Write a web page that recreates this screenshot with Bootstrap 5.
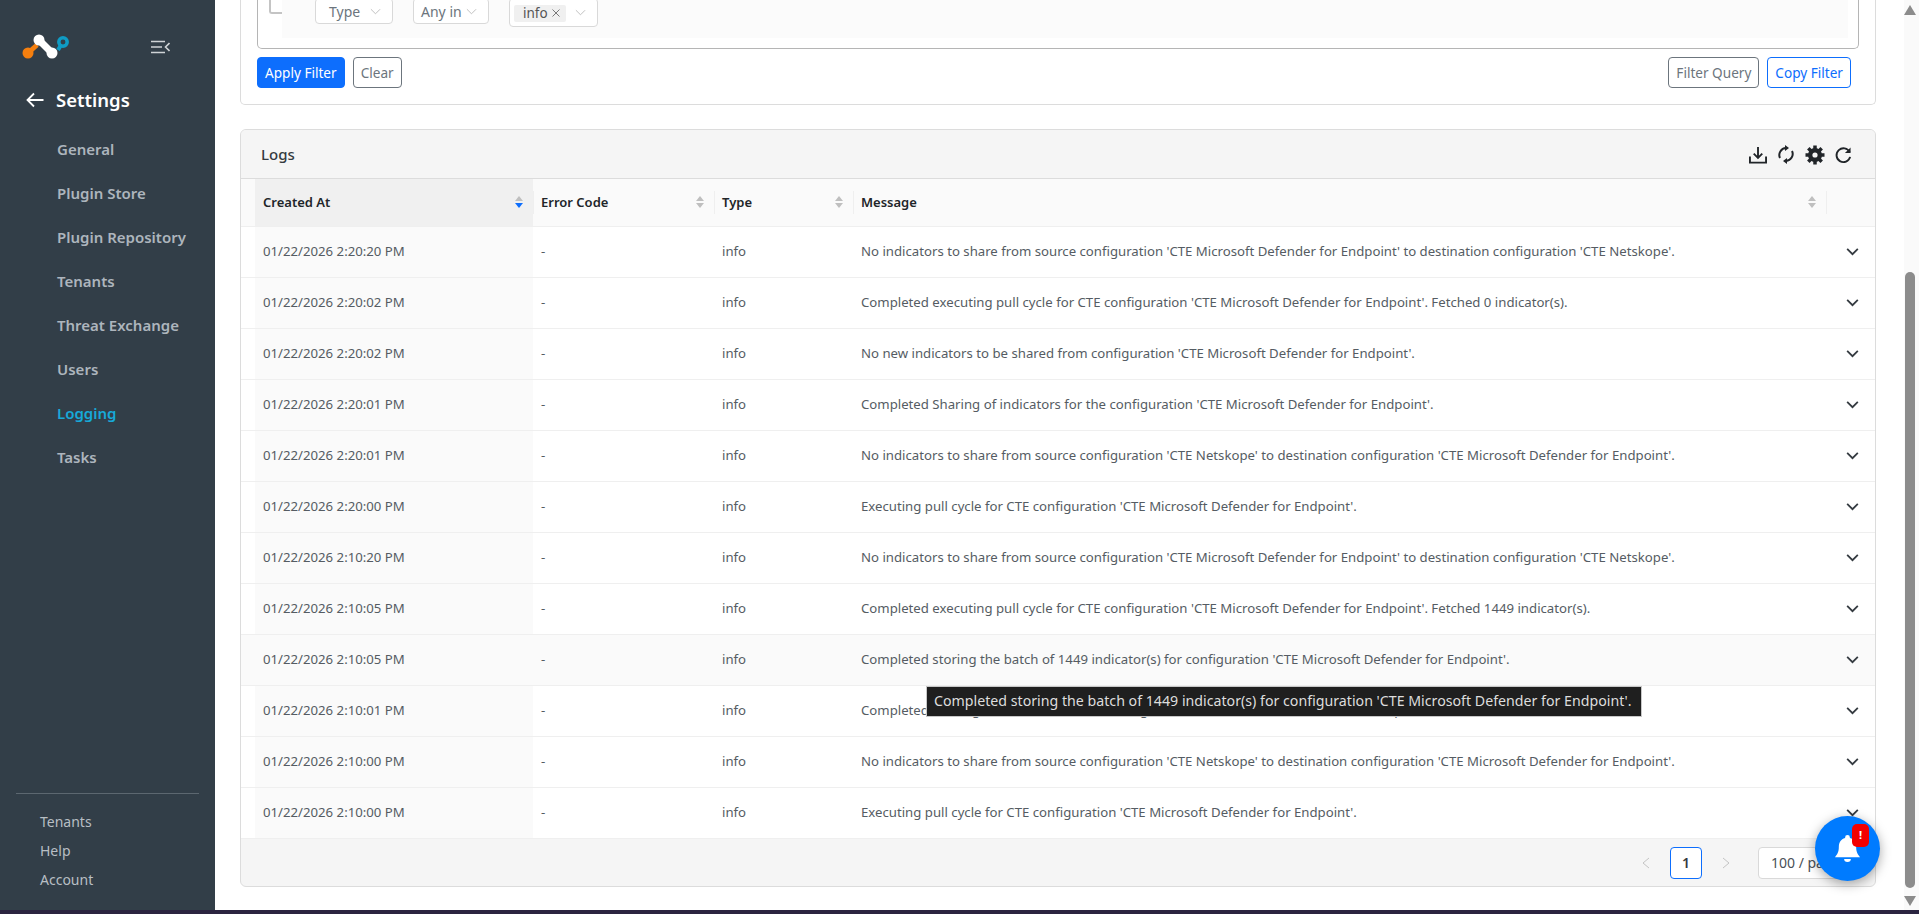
<!DOCTYPE html>
<html lang="en">
<head>
    <meta charset="UTF-8">
    <title>Logging</title>
    <link href="https://cdn.jsdelivr.net/npm/bootstrap@5.3.3/dist/css/bootstrap.min.css" rel="stylesheet">
    <style>
        html, body { height: 100%; overflow: hidden; }
        body { font-family: "Noto Sans", "Open Sans", sans-serif; font-size: 13.2px; color: #495057; background: #2b2440; }
        .shell { height: 910px; background: #fff; }
        .side-bar { width: 215px; background: #323e48; flex: none; height: 910px; }
        .logo-row { height: 58px; margin-top: 18px; padding-left: 22px; padding-right: 45px; }
        .settings-head { color: #fff; font-size: 18.5px; font-weight: 600; padding-left: 26px; gap: 12px; height: 34px; margin-top: 7px; }
        .side-nav { margin-top: 10px; }
        .side-link { display: block; height: 44px; line-height: 44px; padding-left: 57px; color: #adb5bd; font-weight: 600; font-size: 15px; text-decoration: none; }
        .side-link.on { color: #17a9d8; }
        .side-foot { border-top: 1px solid #5c6770; margin: 0 16px; padding: 13px 0 16px 24px; }
        .side-foot a { display: block; height: 29px; line-height: 29px; color: #b8bec4; text-decoration: none; font-size: 14px; }
        .main-pane { flex: 1 1 auto; position: relative; padding: 0 43px 0 25px; overflow: hidden; }
        .scroll-strip { width: 15px; background: #fafafa; position: absolute; right: 0; top: 0; bottom: 0; }
        .scroll-thumb { position: absolute; left: 1px; right: 4px; top: 272px; height: 616px; background: #8c8c8c; border-radius: 5px; }
        .arrow-up, .arrow-down { position: absolute; left: 0; width: 0; height: 0; border-left: 6.5px solid transparent; border-right: 6.5px solid transparent; }
        .arrow-up { top: 5px; border-bottom: 10px solid #8c8c8c; }
        .arrow-down { bottom: 4px; border-top: 10px solid #8c8c8c; }
        .filter-box { height: 105px; border: 1px solid #dcdcdc; border-top: 0; border-radius: 0 0 5px 5px; padding: 0 16px; }
        .rule-box { height: 49px; border: 1px solid #b5b5b5; border-top: 0; border-radius: 0 0 5px 5px; padding-left: 24px; padding-right: 10px; }
        .rule-inner { background: #fbfbfb; height: 38px; padding-left: 33px; gap: 20px; position: relative; }
        .rule-tick { position: absolute; left: -13px; top: -4px; width: 13px; height: 18px; border: 2px solid #c4c4c4; border-top: 0; border-right: 0; border-radius: 0 0 0 3px; }
        .pick { height: 26px; margin-top: -2px; border: 1px solid #d9d9d9; border-radius: 4px; background: #fff; padding-right: 11px; justify-content: space-between; font-size: 14px; color: #6c757d; }
        .pick-type { width: 78px; padding-left: 13px; }
        .pick-op { width: 76px; padding-left: 7px; }
        .pick-val { width: 89px; height: 29px; padding-left: 4px; }
        .pick-tag { background: #f0f0f0; border-radius: 2px; padding: 0 6px 0 9px; color: #555; font-size: 13.5px; width: 52px; height: 17px; line-height: 17px; margin-top: 1px; }
        .btn-row { margin-top: 8px; padding-right: 8px; }
        .flt-btn { height: 31px; padding: 1px 7px 0; font-size: 13.6px; border-radius: 4px; line-height: 1; }
        .log-card { margin-top: 24px; border: 1px solid #dcdcdc; border-radius: 6px; height: 758px; overflow: hidden; background: #f5f5f5; }
        .log-title { height: 49px; padding: 1px 23px 0 20px; background: #f5f5f5; border-bottom: 1px solid #dcdcdc; color: #343a40; font-size: 15px; font-weight: 500; }
        .title-tools { gap: 10px; }
        .log-grid { width: 100%; table-layout: fixed; margin: 0; background: #fff; }
        .log-grid th { height: 47px; background: #fafafa; color: #212529; font-weight: 600; font-size: 13px; padding: 0 8px; border-bottom: 1px solid #efefef; position: relative; vertical-align: middle; }
        .log-grid td { height: 51px; padding: 0 8px; color: #555c63; font-size: 13.2px; border-bottom: 1px solid #efefef; vertical-align: middle; white-space: nowrap; overflow: hidden; }
        .log-grid th.sorted { background: #f0f0f0; }
        .log-grid td.sorted { background: #fafafa; }
        .log-grid tr.hovered td { background: #fafafa; }
        .log-grid .col-gap { width: 14px; padding: 0; background: #fff; }
        .log-grid th.col-gap { background: #fafafa; }
        .log-grid .col-created { width: 278px; }
        .log-grid .col-code { width: 181px; }
        .log-grid .col-type { width: 139px; }
        .log-grid .col-open { width: 49px; }
        .sort-mark { position: absolute; right: 10px; top: 17px; width: 8px; }
        .sort-mark i { display: block; width: 0; height: 0; border-left: 4px solid transparent; border-right: 4px solid transparent; margin-bottom: 2px; }
        .sort-mark i:first-child { border-bottom: 5px solid #bfbfbf; }
        .sort-mark i:last-child { border-top: 5px solid #bfbfbf; }
        .sort-mark i.active { border-top-color: #0d6efd; }
        .th-sep::before { content: ""; position: absolute; left: 0; top: 12px; bottom: 12px; width: 1px; background: #efefef; }
        .pager-row { height: 48px; padding-right: 17px; gap: 12px; color: #495057; }
        .page-box { width: 32px; height: 32px; border: 1px solid #0d6efd; border-radius: 4px; background: #fff; color: #343a40; font-weight: 600; font-size: 14px; }
        .page-size { width: 100px; height: 32px; border: 1px solid #d9d9d9; border-radius: 4px; background: #fff; padding-left: 12px; font-size: 14px; margin-left: 8px; }
        .page-arrow { width: 24px; }
        .tip-box { position: absolute; left: 711px; top: 686px; background: #1f1f1f; color: #ddd; font-size: 14.2px; border: 1px solid #c8c8c8; height: 31px; line-height: 28px; padding: 0 9px 0 7px; white-space: nowrap; z-index: 5; }
        .bell-fab { position: absolute; right: 39px; top: 816px; width: 65px; height: 65px; border-radius: 50%; background: #007bff; box-shadow: 0 3px 12px rgba(0,0,0,.35); z-index: 6; }
        .bell-badge { position: absolute; top: 8px; left: 37px; width: 17px; height: 23px; border-radius: 5px; background: #f40000; color: #fff; font-size: 11px; font-weight: 700; line-height: 22px; text-align: center; }
    </style>
</head>
<body>
    <div class="shell d-flex">
        <aside class="side-bar d-flex flex-column">
            <div class="logo-row d-flex align-items-center justify-content-between">
                <svg width="50" height="30" viewBox="0 0 50 30">
                    <line x1="6" y1="21" x2="15" y2="13" stroke="#f57f0f" stroke-width="5"/>
                    <circle cx="6" cy="21" r="5.500" fill="#f57f0f"/>
                    <line x1="17" y1="8" x2="30" y2="21" stroke="#fff" stroke-width="7"/>
                    <circle cx="17" cy="8" r="5.500" fill="#fff"/>
                    <circle cx="30" cy="21" r="5.500" fill="#fff"/>
                    <line x1="36" y1="18" x2="39" y2="13" stroke="#0f9bc4" stroke-width="4"/>
                    <circle cx="41" cy="10" r="4.200" fill="none" stroke="#0f9bc4" stroke-width="3.500"/>
                </svg>
                <svg width="19" height="14" viewBox="0 0 19 14" fill="none" stroke="#cfd3d6" stroke-width="1.600">
                    <path d="M0 1.500h14M0 7h11M0 12.500h14M18.500 3l-4 4 4 4"/>
                </svg>
            </div>
            <div class="settings-head d-flex align-items-center">
                <svg width="18" height="16" viewBox="0 0 18 16" fill="none" stroke="#fff" stroke-width="1.800"><path d="M17.500 8H2M8 1.500L1.500 8 8 14.500"/></svg>
                <span>Settings</span>
            </div>
            <nav class="side-nav">
                <a class="side-link" href="#">General</a>
                <a class="side-link" href="#">Plugin Store</a>
                <a class="side-link" href="#">Plugin Repository</a>
                <a class="side-link" href="#">Tenants</a>
                <a class="side-link" href="#">Threat Exchange</a>
                <a class="side-link" href="#">Users</a>
                <a class="side-link on" href="#">Logging</a>
                <a class="side-link" href="#">Tasks</a>
            </nav>
            <div class="side-foot mt-auto">
                <a href="#">Tenants</a>
                <a href="#">Help</a>
                <a href="#">Account</a>
            </div>
        </aside>
        <main class="main-pane">
            <section class="filter-box">
                <div class="rule-box">
                    <div class="rule-inner d-flex align-items-start">
                        <span class="rule-tick"></span>
                        <span class="pick pick-type d-inline-flex align-items-center">Type <svg width="11" height="7" viewBox="0 0 12 7" fill="none" stroke="#bbb"><path d="M1 1l5 5 5-5"/></svg></span>
                        <span class="pick pick-op d-inline-flex align-items-center">Any in <svg width="11" height="7" viewBox="0 0 12 7" fill="none" stroke="#bbb"><path d="M1 1l5 5 5-5"/></svg></span>
                        <span class="pick pick-val d-inline-flex align-items-center"><span class="pick-tag d-flex align-items-center justify-content-between">info <svg width="8" height="8" viewBox="0 0 8 8" stroke="#777"><path d="M.5.5l7 7M7.500.5l-7 7"/></svg></span><svg width="11" height="7" viewBox="0 0 12 7" fill="none" stroke="#bbb"><path d="M1 1l5 5 5-5"/></svg></span>
                    </div>
                </div>
                <div class="btn-row d-flex align-items-center">
                    <button class="btn btn-primary flt-btn me-2">Apply Filter</button>
                    <button class="btn btn-outline-secondary flt-btn">Clear</button>
                    <button class="btn btn-outline-secondary flt-btn ms-auto me-2">Filter Query</button>
                    <button class="btn btn-outline-primary flt-btn">Copy Filter</button>
                </div>
            </section>
            <section class="log-card">
                <div class="log-title d-flex align-items-center justify-content-between">
                    <span>Logs</span>
                    <div class="title-tools d-flex align-items-center">
                        <svg width="18" height="18" viewBox="0 0 19 19" fill="none" stroke="#212529" stroke-width="2"><path d="M1 11v6.500h17V11M9.500 1v11M5 8l4.500 4.500L14 8"/></svg>
                        <svg width="18" height="19" viewBox="0 0 18 19" fill="none" stroke="#212529" stroke-width="2"><path d="M3 13A7 7 0 0 1 9 3M15 6a7 7 0 0 1-6 10"/><path d="M8 0l4 3-4 3zM10 19l-4-3 4-3z" fill="#212529" stroke="none"/></svg>
                        <svg width="20" height="20" viewBox="0 0 20 20"><path d="M10 10V.5M10 10v9.500M10 10H.5M10 10h9.500M10 10L3.300 3.300M10 10l6.700-6.700M10 10l-6.700 6.700M10 10l6.700 6.700" stroke="#212529" stroke-width="3.500"/><circle cx="10" cy="10" r="7" fill="#212529"/><circle cx="10" cy="10" r="2.600" fill="#f5f5f5"/></svg>
                        <svg width="17" height="18" viewBox="0 0 18 18" fill="none" stroke="#212529" stroke-width="2"><path d="M15.500 6A7.300 7.300 0 1 0 16 11"/><path d="M16.500 1v6h-6z" fill="#212529" stroke="none"/></svg>
                    </div>
                </div>
                <table class="log-grid" id="logTable">
                    <thead>
                        <tr>
                            <th class="col-gap"></th>
                            <th class="sorted col-created">Created At<span class="sort-mark"><i></i><i class="active"></i></span></th>
                            <th class="th-sep col-code">Error Code<span class="sort-mark"><i></i><i></i></span></th>
                            <th class="th-sep col-type">Type<span class="sort-mark"><i></i><i></i></span></th>
                            <th class="th-sep">Message<span class="sort-mark"><i></i><i></i></span></th>
                            <th class="th-sep col-open"></th>
                        </tr>
                    </thead>
                    <tbody id="logRows"></tbody>
                </table>
                <div class="pager-row d-flex align-items-center justify-content-end">
                    <span class="page-arrow text-center"><svg width="8" height="12" viewBox="0 0 8 12" fill="none" stroke="#c4c4c4"><path d="M7 1L1 6l6 5"/></svg></span>
                    <span class="page-box d-flex align-items-center justify-content-center">1</span>
                    <span class="page-arrow text-center"><svg width="8" height="12" viewBox="0 0 8 12" fill="none" stroke="#c4c4c4"><path d="M1 1l6 5-6 5"/></svg></span>
                    <span class="page-size d-flex align-items-center">100 / page</span>
                </div>
            </section>
            <div class="tip-box">Completed storing the batch of 1449 indicator(s) for configuration 'CTE Microsoft Defender for Endpoint'.</div>
            <div class="bell-fab d-flex align-items-center justify-content-center">
                <svg width="25" height="29" viewBox="0 0 26 30" fill="#fff"><path d="M13 1a2.500 2.500 0 0 1 2.500 2.500v.6C20 5.300 22 9 22 13c0 6 1.500 8 4 11H0c2.500-3 4-5 4-11 0-4 2-7.700 6.500-8.900v-.6A2.500 2.500 0 0 1 13 1z"/><path d="M9.500 26h7a3.500 3 0 0 1-7 0z"/></svg>
                <span class="bell-badge">!</span>
            </div>
            <div class="scroll-strip">
                <span class="arrow-up"></span>
                <div class="scroll-thumb"></div>
                <span class="arrow-down"></span>
            </div>
        </main>
    </div>
    <script>
        const MDE = "'CTE Microsoft Defender for Endpoint'";
        const logs = [
            ["01/22/2026 2:20:20 PM", `No indicators to share from source configuration ${MDE} to destination configuration 'CTE Netskope'.`],
            ["01/22/2026 2:20:02 PM", `Completed executing pull cycle for CTE configuration ${MDE}. Fetched 0 indicator(s).`],
            ["01/22/2026 2:20:02 PM", `No new indicators to be shared from configuration ${MDE}.`],
            ["01/22/2026 2:20:01 PM", `Completed Sharing of indicators for the configuration ${MDE}.`],
            ["01/22/2026 2:20:01 PM", `No indicators to share from source configuration 'CTE Netskope' to destination configuration ${MDE}.`],
            ["01/22/2026 2:20:00 PM", `Executing pull cycle for CTE configuration ${MDE}.`],
            ["01/22/2026 2:10:20 PM", `No indicators to share from source configuration ${MDE} to destination configuration 'CTE Netskope'.`],
            ["01/22/2026 2:10:05 PM", `Completed executing pull cycle for CTE configuration ${MDE}. Fetched 1449 indicator(s).`],
            ["01/22/2026 2:10:05 PM", `Completed storing the batch of 1449 indicator(s) for configuration ${MDE}.`],
            ["01/22/2026 2:10:01 PM", `Completed Sharing of indicators for the configuration ${MDE}.`],
            ["01/22/2026 2:10:00 PM", `No indicators to share from source configuration 'CTE Netskope' to destination configuration ${MDE}.`],
            ["01/22/2026 2:10:00 PM", `Executing pull cycle for CTE configuration ${MDE}.`]
        ];
        const chevron = '<svg width="13" height="8" viewBox="0 0 14 9" fill="none" stroke="#343a40" stroke-width="2"><path d="M1 1l6 6 6-6"/></svg>';
        document.getElementById('logRows').innerHTML = logs.map((row, i) => `
            <tr class="${i === 8 ? 'hovered' : ''}">
                <td class="col-gap"></td>
                <td class="sorted">${row[0]}</td>
                <td>-</td>
                <td>info</td>
                <td>${row[1]}</td>
                <td class="text-end pe-3">${chevron}</td>
            </tr>`).join('');
    </script>
    <script src="https://cdn.jsdelivr.net/npm/bootstrap@5.3.3/dist/js/bootstrap.bundle.min.js"></script>
</body>
</html>
